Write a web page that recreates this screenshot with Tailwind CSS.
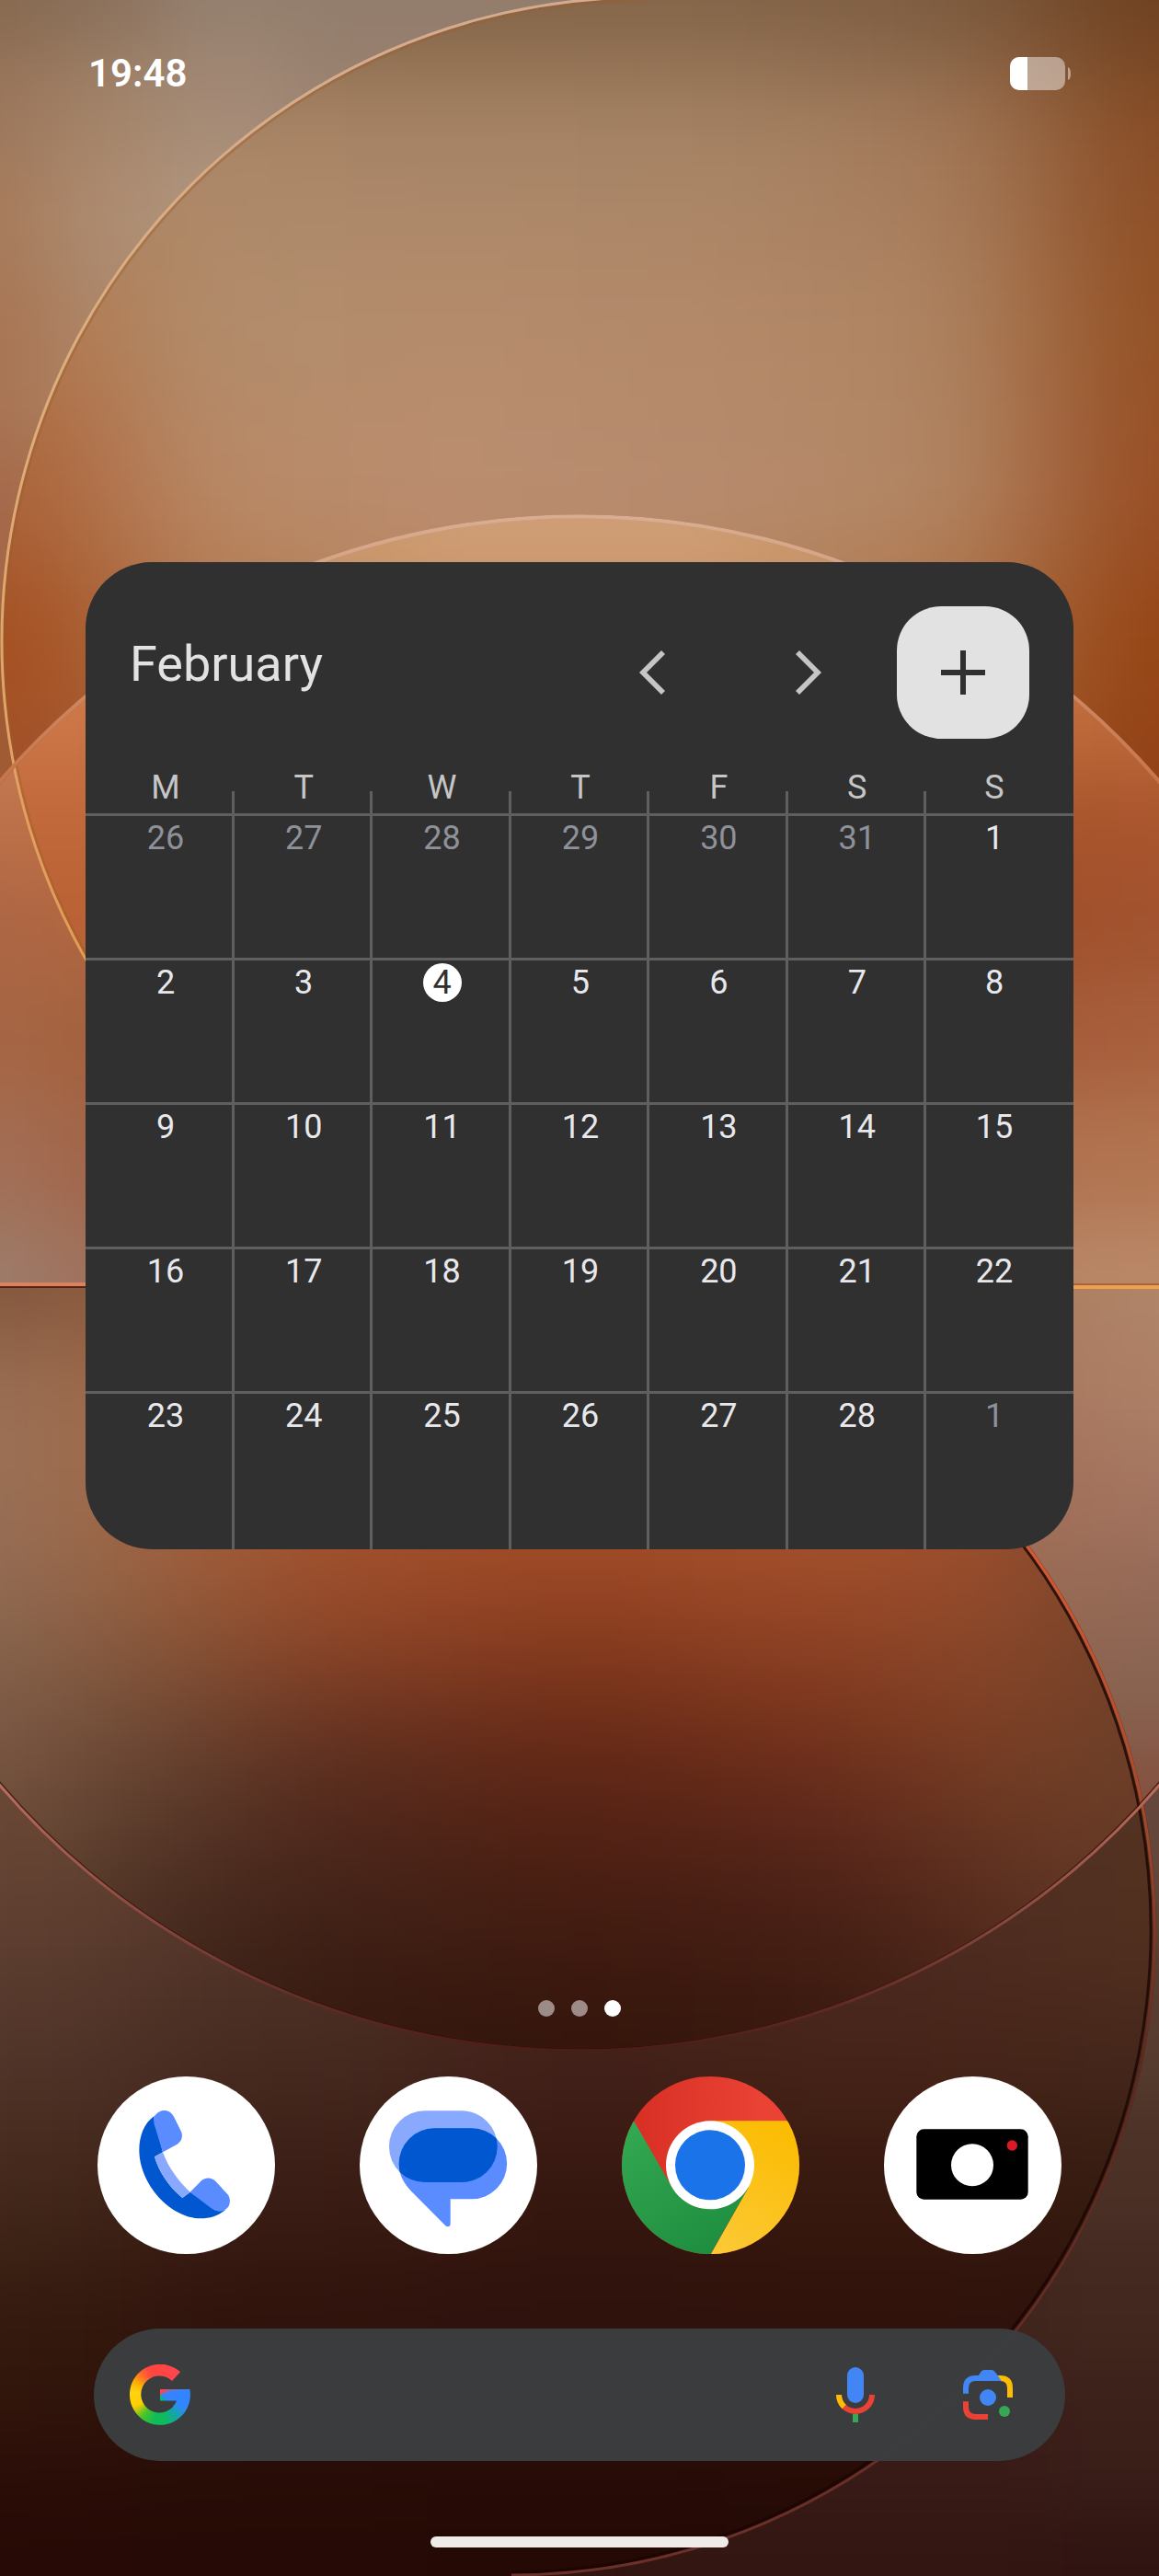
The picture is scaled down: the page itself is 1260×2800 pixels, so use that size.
<!DOCTYPE html>
<html lang="en">
<head>
    <meta charset="UTF-8">
    <meta name="viewport" content="width=device-width, initial-scale=1.0">
    <title>Home screen</title>
    <script src="https://cdn.jsdelivr.net/npm/@tailwindcss/browser@4"></script>
</head>
<body class="relative min-h-screen flex flex-col overflow-x-hidden bg-[#2e110c] font-[Roboto,sans-serif]">

    <!-- Wallpaper -->
    <svg class="absolute inset-0 w-full h-full" viewBox="0 0 1260 2800" preserveAspectRatio="xMidYMid slice" aria-hidden="true">
        <defs>
            <filter id="soft" filterUnits="userSpaceOnUse" x="-400" y="-400" width="2060" height="3600" color-interpolation-filters="sRGB">
                <feGaussianBlur stdDeviation="88 60"/>
            </filter>
            <filter id="softer" filterUnits="userSpaceOnUse" x="-400" y="-400" width="2060" height="3600" color-interpolation-filters="sRGB">
                <feGaussianBlur stdDeviation="45 40"/>
            </filter>
            <clipPath id="upper"><rect width="1260" height="1397"/></clipPath>
            <clipPath id="lower"><rect y="1397" width="1260" height="1403"/></clipPath>
            <clipPath id="upperArc" clip-path="url(#upper)"><path d="M702 -3A700 700 0 0 0 702 1397H1300V-3Z"/></clipPath>
            <clipPath id="upperMid" clip-path="url(#upper)"><circle cx="630" cy="1396" r="833"/></clipPath>
            <clipPath id="upperBoth" clip-path="url(#upperArc)"><circle cx="630" cy="1396" r="833"/></clipPath>
            <clipPath id="lowerArc" clip-path="url(#lower)"><path d="M556 1397A701 701 0 0 1 556 2799V2810H-10V1397Z"/></clipPath>
            <clipPath id="lowerMid" clip-path="url(#lower)"><circle cx="630" cy="1396" r="833"/></clipPath>
            <clipPath id="lowerBoth" clip-path="url(#lowerArc)"><circle cx="630" cy="1396" r="833"/></clipPath>
            <linearGradient id="rimA" x1="0" y1="0" x2="0" y2="1">
                <stop offset="0" stop-color="#d3ab90"/><stop offset=".4" stop-color="#dcae7c"/><stop offset="1" stop-color="#e29a52"/>
            </linearGradient>
            <linearGradient id="rimB" gradientUnits="userSpaceOnUse" x1="0" y1="1680" x2="0" y2="2800">
                <stop offset="0" stop-color="#d75a35"/><stop offset=".25" stop-color="#a84a2c"/><stop offset=".5" stop-color="#5a2a20"/><stop offset="1" stop-color="#6b302a"/>
            </linearGradient>
            <linearGradient id="rimC" gradientUnits="userSpaceOnUse" x1="0" y1="1930" x2="0" y2="2230">
                <stop offset="0" stop-color="#c07060"/><stop offset=".5" stop-color="#8a4a40"/><stop offset="1" stop-color="#4a1d16"/>
            </linearGradient>
            <linearGradient id="rimTop" gradientUnits="userSpaceOnUse" x1="0" y1="560" x2="0" y2="850">
                <stop offset="0" stop-color="#d8ae93"/><stop offset="1" stop-color="#c8744a"/>
            </linearGradient>
        </defs>
        <g id="mesh"></g>
        <g fill="none">
            <path d="M702 0A697 697 0 0 0 120 1081" stroke="#9c5c2c" stroke-opacity=".4" stroke-width="3"/>
            <path d="M702 -3A700 700 0 0 0 120 1086" stroke="url(#rimA)" stroke-width="3"/>
            <path d="M-30 888A829 829 0 0 1 1290 888" stroke="#a56a38" stroke-width="3"/>
            <path d="M-30 886A833 833 0 0 1 1290 886" stroke="url(#rimTop)" stroke-width="4"/>
            <path d="M1058 1616A698 698 0 0 1 556 2796" stroke="#1c0503" stroke-opacity=".8" stroke-width="3"/>
            <path d="M1060 1614A700 700 0 0 1 556 2799" stroke="url(#rimB)" stroke-width="3"/>
            <path d="M-30 1901A829 829 0 0 0 1290 1901" stroke="#2c0a04" stroke-opacity=".6" stroke-width="3"/>
            <path d="M-30 1904A833 833 0 0 0 1290 1904" stroke="url(#rimC)" stroke-width="3"/>
            <path d="M0 1396H200" stroke="#d9825f" stroke-width="4"/>
            <path d="M0 1399H200" stroke="#5a2212" stroke-width="2"/>
            <path d="M1060 1396H1260" stroke="#a8643c" stroke-width="2"/>
            <path d="M1060 1399H1260" stroke="#f0a04c" stroke-width="4"/>
        </g>
    </svg>

    <!-- Status bar -->
    <header class="relative flex items-center justify-between pl-24 pr-24 pt-[52px] text-white">
        <time class="text-[42px] leading-[56px] font-semibold">19:48</time>
        <svg class="w-[66px] h-[36px]" viewBox="0 0 66 36" role="img" aria-label="Battery">
            <clipPath id="cell"><rect width="60" height="36" rx="10"/></clipPath>
            <g clip-path="url(#cell)">
                <rect width="60" height="36" fill="#fff" fill-opacity=".45"/>
                <rect width="19" height="36" fill="#fff"/>
            </g>
            <path d="M63 11q3 1 3 7t-3 7z" fill="#fff" fill-opacity=".45"/>
        </svg>
    </header>

    <!-- Calendar widget -->
    <main class="relative mx-[93px] mt-[503px] rounded-[72px] bg-[#303030] overflow-hidden">
        <div class="flex items-start justify-between pl-12 pr-12 pt-12">
            <h1 class="mt-[31px] text-[54px] leading-[64px] text-[#e2e2e2]">February</h1>
            <div class="flex items-center">
                <button type="button" aria-label="Previous month" class="mr-[72px]">
                    <svg class="w-24 h-24" viewBox="0 0 24 24" fill="#c6c6c6"><path d="M14 6l-6 6 6 6 1-1-5-5 5-5z"/></svg>
                </button>
                <button type="button" aria-label="Next month" class="mr-12">
                    <svg class="w-24 h-24" viewBox="0 0 24 24" fill="#c6c6c6"><path d="M9.500 6l6 6-6 6-1-1 5-5-5-5z"/></svg>
                </button>
                <button type="button" aria-label="New event" class="flex w-36 h-36 items-center justify-center rounded-[48px] bg-[#e2e2e2]">
                    <svg class="w-12 h-12" viewBox="0 0 48 48" fill="#303030"><path d="M21 0h6v21h21v6H27v21h-6V27H0v-6h21z"/></svg>
                </button>
            </div>
        </div>

        <table class="w-full mt-[29px] table-fixed border-collapse text-center text-[36px] leading-[42px] text-[#e8e8ec]">
            <colgroup>
                <col class="w-[162px]"><col><col><col><col><col><col class="w-[160px]">
            </colgroup>
            <thead class="text-[#c6c6c6]">
                <tr id="weekdays" class="h-[52px] align-top"></tr>
            </thead>
            <tbody id="days"></tbody>
        </table>
    </main>

    <!-- Page indicator -->
    <nav aria-label="Pages" class="relative flex items-center justify-center gap-[18px] h-5 mt-[489px]">
        <a href="#page-1" aria-label="Page 1" class="w-[18px] h-[18px] rounded-full bg-white/50"></a>
        <a href="#page-2" aria-label="Page 2" class="w-[18px] h-[18px] rounded-full bg-white/50"></a>
        <a href="#page-3" aria-label="Page 3" aria-current="page" class="w-[18px] h-[18px] rounded-full bg-white"></a>
    </nav>

    <!-- Dock -->
    <section class="relative flex justify-between mx-[106px] mt-16">
        <button type="button" aria-label="Phone">
            <svg class="w-[193px] h-[193px]" viewBox="48 50 579 579">
                <circle cx="337.500" cy="339.500" r="289.500" fill="#fff"/>
                <path fill="#0057d0" d="M232 180C200 203 184 245 184 290C184 400 285 513 385 513C415 513 440 506 464 486L415 470L350 427L325 446C280 410 248 360 234 312L261 297Z"/>
                <path fill="#5a8cff" d="M232 181C244 166 255 161 266 161C280 161 290 169 297 181L320 228C328 244 323 262 308 271L261 297L233 206C231 196 230 188 232 181Z"/>
                <path fill="#89a9ff" d="M261 297L234 312C248 360 280 410 325 446L350 427C312 392 278 345 261 297Z"/>
                <path fill="#5a8cff" d="M350 427L384 393C398 378 420 378 434 393L472 434C482 446 482 464 474 476C465 487 456 490 446 490C435 490 425 485 415 477Z"/>
            </svg>
        </button>
        <button type="button" aria-label="Messages">
            <svg class="w-[193px] h-[193px]" viewBox="903 50 579 579">
                <clipPath id="bubble"><rect x="999" y="162" width="353" height="233" rx="116"/></clipPath>
                <circle cx="1192.500" cy="339.500" r="289.500" fill="#fff"/>
                <rect x="999" y="162" width="353" height="233" rx="116" fill="#89a9ff"/>
                <path fill="#5a8cff" d="M1147 219H1268A115.500 115.500 0 0 1 1268 450H1199V530Q1199 540 1190 540Q1186 540 1183 537L1075 428C1045 398 1031 370 1031 335A116 116 0 0 1 1147 219Z"/>
                <path clip-path="url(#bubble)" fill="#0057d0" d="M1147 219H1268A115.500 115.500 0 0 1 1268 450H1199V530Q1199 540 1190 540Q1186 540 1183 537L1075 428C1045 398 1031 370 1031 335A116 116 0 0 1 1147 219Z"/>
            </svg>
        </button>
        <button type="button" aria-label="Chrome">
            <svg class="w-[193px] h-[193px]" viewBox="78 50 579 579">
                <defs>
                    <clipPath id="disc"><circle cx="367.500" cy="339.500" r="289.500"/></clipPath>
                    <linearGradient id="red"><stop offset="0.100" stop-color="#d93025"/><stop offset=".8" stop-color="#ea4335"/></linearGradient>
                    <linearGradient id="green" x1=".7" y1="1" x2=".1" y2="0"><stop offset="0" stop-color="#1e8e3e"/><stop offset="1" stop-color="#34a853"/></linearGradient>
                    <linearGradient id="yellow" x1=".2" y1="1" x2=".6" y2="0"><stop offset="0" stop-color="#fcc934"/><stop offset="1" stop-color="#fbbc04"/></linearGradient>
                </defs>
                <g clip-path="url(#disc)">
                    <rect x="78" y="50" width="579" height="579" fill="url(#red)"/>
                    <path fill="url(#yellow)" d="M367 195H660V632H367L491 412L367 340Z"/>
                    <path fill="url(#green)" d="M118 196L242 412L367 340L491 412L366 632H70V196Z"/>
                </g>
                <circle cx="366" cy="339" r="144" fill="#fff"/>
                <circle cx="366" cy="339" r="114" fill="#1a73e8"/>
            </svg>
        </button>
        <button type="button" aria-label="Camera">
            <svg class="w-[193px] h-[193px]" viewBox="933 50 579 579">
                <circle cx="1222.500" cy="339.500" r="289.500" fill="#fff"/>
                <rect x="1039" y="222" width="364" height="229" rx="24"/>
                <circle cx="1221" cy="339" r="69" fill="#fff"/>
                <circle cx="1351" cy="275" r="17" fill="#dc1a26"/>
            </svg>
        </button>
    </section>

    <!-- Search bar -->
    <form role="search" class="relative flex items-center h-36 mx-[102px] mt-[81px] pl-[39px] pr-12 rounded-full bg-[#3b3d3e]/98">
        <span class="w-[66px] h-[66px] shrink-0 bg-[conic-gradient(#ff4641_0deg,#ff4550_45deg,#3186ff_80deg,#3186ff_118deg,#12a8a0_145deg,#0ebc5f_170deg,#12bd55_195deg,#4cc426_220deg,#ffcf00_246deg,#ffd314_275deg,#ffb000_296deg,#ff6a2a_318deg,#ff4641_336deg)] [clip-path:path('M55_8.300A33_33_0_1_0_65.400_27H33V39.500H51A20_20_0_1_1_46_18Z')]"></span>
        <input type="search" aria-label="Search" class="flex-1 min-w-0 h-full px-6 bg-transparent text-[36px] text-white outline-none">
        <button type="button" aria-label="Voice search" class="mr-[72px]">
            <svg class="w-[72px] h-[72px]" viewBox="132 171 216 216" fill="none" stroke-width="18">
                <rect x="213" y="189" width="54" height="117" rx="27" fill="#4285f4"/>
                <path d="M186 279A54 54 0 0 0 294 279" stroke="#ea4335"/>
                <path d="M186 279A54 54 0 0 0 203 318" stroke="#fbbc04"/>
                <path d="M240 342v27" stroke="#34a853"/>
            </svg>
        </button>
        <button type="button" aria-label="Search with camera">
            <svg class="w-[72px] h-[72px]" viewBox="564 171 216 216" fill="none" stroke-width="18">
                <path d="M700 225H712Q744 225 744 257V288" stroke="#fbbc04"/>
                <path d="M600 275V257Q600 225 632 225H700" stroke="#4285f4"/>
                <path d="M640 218L650 203Q654 198 660 198H684Q690 198 694 203L704 216L716 234H640Z" fill="#4285f4"/>
                <path d="M600 301V319Q600 351 632 351H672" stroke="#ea4335"/>
                <circle cx="672" cy="288" r="27" fill="#4285f4"/>
                <circle cx="726" cy="333" r="18" fill="#34a853"/>
            </svg>
        </button>
    </form>

    <!-- Gesture handle -->
    <div class="relative w-[324px] h-3 mx-auto mt-[82px] mb-[31px] rounded-full bg-[#eeebe9]"></div>

    <script>
        // Calendar days
        const weeks = [
            [26, 27, 28, 29, 30, 31, 1],
            [2, 3, 4, 5, 6, 7, 8],
            [9, 10, 11, 12, 13, 14, 15],
            [16, 17, 18, 19, 20, 21, 22],
            [23, 24, 25, 26, 27, 28, 1]
        ];
        const today = 4;
        const days = document.getElementById('days');
        const weekdays = document.getElementById('weekdays');

        ['M', 'T', 'W', 'T', 'F', 'S', 'S'].forEach((name, i) => {
            const th = document.createElement('th');
            th.scope = 'col';
            th.className = 'p-0 pt-[3px] relative font-normal';
            if (i === 0) th.classList.add('pl-3');
            if (i === 6) th.classList.add('pr-3');
            th.innerHTML = name + (i < 6 ? '<span class="absolute right-0 bottom-0 w-[3px] h-6 bg-[#5f5f5f]"></span>' : '');
            weekdays.appendChild(th);
        });

        weeks.forEach((week, w) => {
            const tr = document.createElement('tr');
            tr.className = w === 4 ? 'h-[172px] align-top' : 'h-[157px] align-top';
            week.forEach((day, i) => {
                const td = document.createElement('td');
                const muted = (w === 0 && day > 7) || (w === 4 && day < 7);
                td.className = 'p-0 relative';
                if (i === 0) td.classList.add('pl-3');
                if (i === 6) td.classList.add('pr-3');
                const line = i < 6 ? '<span class="absolute right-0 top-0 w-[3px] h-full bg-[#5f5f5f]"></span>' : '';
                let color = muted ? 'text-[#8e9199]' : '';
                if (w === 1 && day === today) color = 'rounded-full bg-white text-[#303030]';
                td.innerHTML = line +
                    '<span class="absolute inset-x-0 top-0 h-[3px] bg-[#5f5f5f]"></span>' +
                    '<span class="inline-block mt-[6px] w-[42px] ' + color + '">' + day + '</span>';
                tr.appendChild(td);
            });
            days.appendChild(tr);
        });

        // Wallpaper colour meshes, one per glass panel
        const panels = [
            { clip: 'upper', blur: 'softer', xs: [0, 110, 230, 400], ys: [0, 110, 220, 400, 580, 800], colors: [
                '#86694f #8b705b #94806f #927c6b', '#9a765c #a28368 #a48a76 #9a8270', '#a67a5a #ad8b70 #b0957d #b0957d',
                '#a87452 #ae8668 #b08a70 #b08a70', '#a5694a #a86c4c #a86c4c #a86c4c', '#a05a34 #a05a34 #a05a34 #a05a34'] },
            { clip: 'upperArc', blur: 'soft', xs: [0, 252, 504, 756, 1008, 1260], ys: [-20, 175, 350, 525, 700, 875], colors: [
                '#846548 #846548 #836446 #836448 #7c5c40 #6d4020', '#ac8664 #ac8768 #a98668 #a88566 #a57c5c #8a4d25',
                '#b0754a #b28d6c #b48c6b #b38969 #ae8462 #935024', '#ab6238 #b98a68 #ba8d70 #b68b6d #b28765 #984d24',
                '#a44e20 #b27a4e #ba8562 #b98460 #b07448 #954414', '#a0502a #a8582c #b07040 #b07040 #a45a2c #903f15'] },
            { clip: 'upperMid', blur: 'softer', xs: [0, 120], ys: [800, 900, 1000, 1130, 1260, 1390], colors: [
                '#c87c56 #c87c56', '#bb7049 #c0703f', '#ad6644 #b06640', '#a56645 #a3603c', '#a26e55 #a26448', '#9d7b6a #a0705a'] },
            { clip: 'upperBoth', blur: 'softer', xs: [60, 250, 630, 1000, 1165, 1270], ys: [560, 700, 800, 890, 1000, 1120, 1260, 1390], colors: [
                '#d58452 #c9986e #cf9e76 #c9966c #c8784a #c8784a', '#d58050 #c88c60 #c68c60 #c68c60 #c87444 #c87444',
                '#cb7446 #c06a3a #c06a3a #c06a3a #bd6839 #bb6637', '#c0683a #c06a3a #c06a3a #c06a3a #a8532b #a9552e',
                '#bb6234 #b06030 #b06030 #a0502b #a0502b #a2532f', '#b06038 #b06030 #b06030 #a65c3a #a65c3a #a8603c',
                '#b06038 #b06030 #b06030 #b07250 #b07250 #b27550', '#b06038 #b06030 #b06030 #b88665 #b88665 #b98868'] },
            { clip: 'lower', blur: 'softer', xs: [1000, 1250], ys: [2000, 2200, 2350, 2500, 2650, 2800], colors: [
                '#5a3e34 #64463a', '#50352a #583c30', '#462c22 #4b3126', '#40241c #42281f', '#391b17 #3b1f19', '#331611 #301411'] },
            { clip: 'lowerArc', blur: 'soft', xs: [0, 300, 630, 950, 1240], ys: [1960, 2100, 2230, 2380, 2540, 2780], colors: [
                '#6b4836 #5c3c2c #50302a #50302a #523222', '#5e3f30 #523428 #4a2a20 #4c2a20 #523020', '#52352a #462a20 #43211a #482419 #46271b',
                '#43281b #3a1d14 #36170f #37190f #361b10', '#33180d #2e120b #2e110c #2f110a #2d110a', '#270a05 #260a05 #240904 #240a05 #240a05'] },
            { clip: 'lowerMid', blur: 'softer', xs: [1130, 1250], ys: [1400, 1500, 1620, 1730, 1840, 1960], colors: [
                '#ab7d60 #b08568', '#a97a60 #ad8066', '#a3705a #a47560', '#986a54 #946a56', '#8a6350 #886250', '#80503c #85503f'] },
            { clip: 'lowerBoth', blur: 'soft', xs: [0, 150, 380, 630, 880, 1100, 1240], ys: [1380, 1520, 1680, 1790, 1900, 2010, 2120, 2230], colors: [
                '#7b523a #8e5a3c #a85a34 #a85a34 #a85a34 #a85a34 #a85a34', '#9b7258 #a06847 #a85a34 #a85a34 #a85a34 #a85a34 #8a4a2c',
                '#957058 #a06442 #a2502b #a24b26 #a5502b #9a4f2d #70422c', '#86654f #865538 #8a4226 #843a1e #8c4023 #8a472b #6c4029',
                '#7a5844 #684532 #5e2e1e #642816 #702f1a #7c4024 #683e28', '#6e4e3a #513426 #4a251a #4e2013 #54241a #633422 #683c28',
                '#644634 #43281c #3c1e14 #3e1a10 #421d12 #502a1c #60382a', '#50342a #3c2018 #34170d #33140b #36170d #44221a #50302a'] }
        ];
        const ns = 'http://www.w3.org/2000/svg';
        const mesh = document.getElementById('mesh');
        const edges = list => [list[0] - 400, ...list.slice(1).map((v, i) => (v + list[i]) / 2), list[list.length - 1] + 400];

        panels.forEach(panel => {
            const outer = document.createElementNS(ns, 'g');
            outer.setAttribute('clip-path', 'url(#' + panel.clip + ')');
            const inner = document.createElementNS(ns, 'g');
            inner.setAttribute('filter', 'url(#' + panel.blur + ')');
            const ex = edges(panel.xs);
            const ey = edges(panel.ys);
            panel.colors.forEach((row, r) => row.split(' ').forEach((color, c) => {
                const rect = document.createElementNS(ns, 'rect');
                rect.setAttribute('x', ex[c]);
                rect.setAttribute('y', ey[r]);
                rect.setAttribute('width', ex[c + 1] - ex[c] + 1);
                rect.setAttribute('height', ey[r + 1] - ey[r] + 1);
                rect.setAttribute('fill', color);
                inner.appendChild(rect);
            }));
            outer.appendChild(inner);
            mesh.appendChild(outer);
        });
    </script>
</body>
</html>
